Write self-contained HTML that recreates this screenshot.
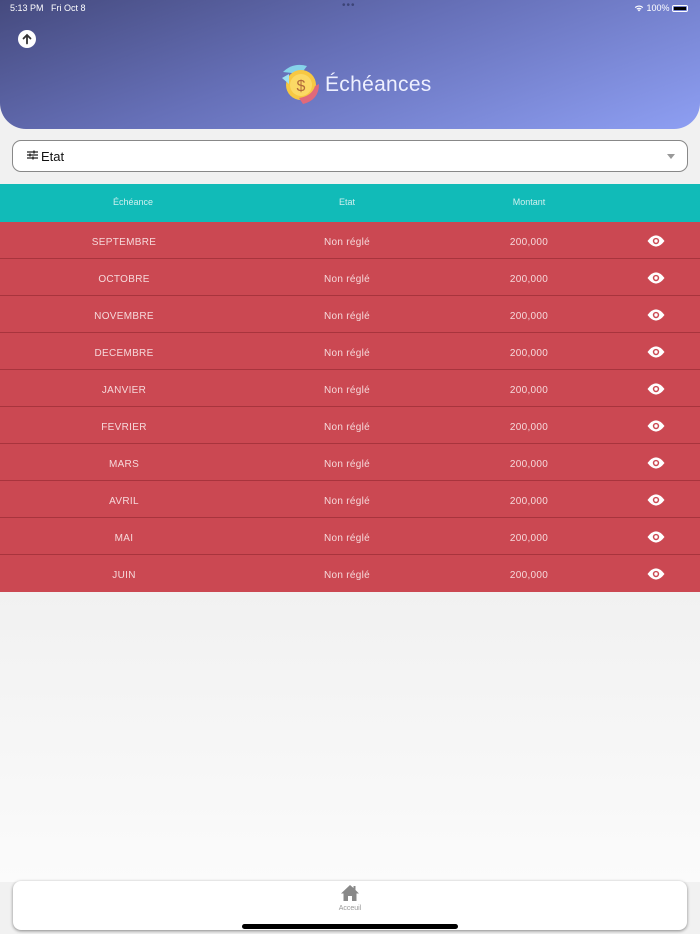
<!DOCTYPE html>
<html><head><meta charset="utf-8"><style>
*{margin:0;padding:0;box-sizing:border-box}
body{width:700px;height:934px;overflow:hidden;background:#f1f1f1;font-family:"Liberation Sans",sans-serif;position:relative}
.hdr{position:absolute;left:0;top:0;width:700px;height:129px;border-radius:0 0 26px 26px;background:linear-gradient(160deg,#454a7e 0%,#6670b8 45%,#8e9ff3 100%)}
.sb{position:absolute;top:3px;font-size:9px;color:#fff}
.back{position:absolute;left:18px;top:30px;width:18px;height:18px;border-radius:50%;background:#fff}
.title{position:absolute;left:325px;top:73px;font-size:21px;color:#eef0ff;font-weight:300;letter-spacing:.3px}
.sel{position:absolute;left:12px;top:140px;width:676px;height:32px;background:#fff;border:1.5px solid #888;border-radius:9px}
.sel span{position:absolute;left:28px;top:8px;font-size:13px;color:#111}
.th{position:absolute;left:0;top:184px;width:700px;height:38px;background:#11bbb8}
.th div,.row div{position:absolute;transform:translateX(-50%);white-space:nowrap}
.th div{top:13px;font-size:9px;color:#d0f0ef}
.row{position:absolute;left:0;width:700px;height:37px;background:#cb4852;border-bottom:1px solid #a8343d}
.row div{top:15px;font-size:10px;color:#f6d9db;letter-spacing:.3px}
.grad{position:absolute;left:0;top:592px;width:700px;height:290px;background:linear-gradient(#f1f1f1,#fbfbfb)}
.nav{position:absolute;left:13px;top:881px;width:674px;height:49px;background:#fff;border-radius:8px;box-shadow:0 1px 3px rgba(0,0,0,.45)}
.bar{position:absolute;left:242px;top:924px;width:216px;height:5px;border-radius:3px;background:#000}
</style></head><body>
<div class="hdr">
<div class="sb" style="left:10px">5:13 PM&nbsp;&nbsp; Fri Oct 8</div>
<div class="sb" style="left:342px;top:0;font-size:10px;letter-spacing:1px;color:#3c4477">•••</div>
<div class="sb" style="left:634px">
<svg width="10" height="8" viewBox="0 0 10 8" style="vertical-align:-1px"><path d="M5 7.5L3.6 6a2 2 0 0 1 2.8 0zM2.4 4.8a3.7 3.7 0 0 1 5.2 0l-.8.8a2.6 2.6 0 0 0-3.6 0zM.8 3.2a6 6 0 0 1 8.4 0l-.8.8a4.9 4.9 0 0 0-6.8 0z" fill="#fff"/></svg> 100%</div>
<div style="position:absolute;left:672px;top:5px;width:16px;height:7px;border:1px solid #fff;border-radius:2px;padding:1px"><div style="width:100%;height:100%;background:#000"></div></div>
<div class="back"><svg width="18" height="18" viewBox="0 0 18 18"><path d="M9 13.5V5M5.5 8.5L9 5l3.5 3.5" stroke="#333" stroke-width="1.8" fill="none" stroke-linecap="round"/></svg></div>
<svg style="position:absolute;left:279px;top:62px" width="44" height="44" viewBox="0 0 44 44">
<path d="M4 10 Q14 0 28 4 L22 12 Z" fill="#86d3ea"/>
<circle cx="22" cy="23" r="15" fill="#f7c843"/>
<circle cx="22" cy="23" r="11" fill="#fbd965"/>
<text x="22" y="29" font-size="16" text-anchor="middle" fill="#b06a3a" font-family="Liberation Sans">$</text>
<path d="M40 22 Q40 38 24 42 L20 36 Q33 34 36 24 Z" fill="#e2697a"/>
<path d="M3 16 L10 12 L10 22 Z" fill="#9fe0f0"/>
</svg>
<div class="title">Échéances</div>
</div>
<div class="sel"><svg style="position:absolute;left:14px;top:9px" width="11" height="10" viewBox="0 0 11 10"><path d="M0 2h11M0 5h11M0 8h11" stroke="#222" stroke-width="1.2"/><path d="M7 0.5v3M3 3.5v3M6 6.5v3" stroke="#222" stroke-width="1.4"/></svg><span>Etat</span>
<svg style="position:absolute;right:12px;top:13px" width="8" height="5"><path d="M0 0h8L4 5z" fill="#999"/></svg></div>
<div class="th"><div style="left:133px">Échéance</div><div style="left:347px">Etat</div><div style="left:529px">Montant</div></div>
<div class="row" style="top:222px"><div style="left:124px">SEPTEMBRE</div><div style="left:347px">Non réglé</div><div style="left:529px">200,000</div><div style="left:656px;top:13px"><svg width="17" height="12" viewBox="0 0 16 11"><path d="M0 5.5Q8-5 16 5.5Q8 16 0 5.5z" fill="#fff"/><circle cx="8" cy="5.5" r="3" fill="#cb4852"/><circle cx="8" cy="5.5" r="1.6" fill="#fff"/></svg></div></div>
<div class="row" style="top:259px"><div style="left:124px">OCTOBRE</div><div style="left:347px">Non réglé</div><div style="left:529px">200,000</div><div style="left:656px;top:13px"><svg width="17" height="12" viewBox="0 0 16 11"><path d="M0 5.5Q8-5 16 5.5Q8 16 0 5.5z" fill="#fff"/><circle cx="8" cy="5.5" r="3" fill="#cb4852"/><circle cx="8" cy="5.5" r="1.6" fill="#fff"/></svg></div></div>
<div class="row" style="top:296px"><div style="left:124px">NOVEMBRE</div><div style="left:347px">Non réglé</div><div style="left:529px">200,000</div><div style="left:656px;top:13px"><svg width="17" height="12" viewBox="0 0 16 11"><path d="M0 5.5Q8-5 16 5.5Q8 16 0 5.5z" fill="#fff"/><circle cx="8" cy="5.5" r="3" fill="#cb4852"/><circle cx="8" cy="5.5" r="1.6" fill="#fff"/></svg></div></div>
<div class="row" style="top:333px"><div style="left:124px">DECEMBRE</div><div style="left:347px">Non réglé</div><div style="left:529px">200,000</div><div style="left:656px;top:13px"><svg width="17" height="12" viewBox="0 0 16 11"><path d="M0 5.5Q8-5 16 5.5Q8 16 0 5.5z" fill="#fff"/><circle cx="8" cy="5.5" r="3" fill="#cb4852"/><circle cx="8" cy="5.5" r="1.6" fill="#fff"/></svg></div></div>
<div class="row" style="top:370px"><div style="left:124px">JANVIER</div><div style="left:347px">Non réglé</div><div style="left:529px">200,000</div><div style="left:656px;top:13px"><svg width="17" height="12" viewBox="0 0 16 11"><path d="M0 5.5Q8-5 16 5.5Q8 16 0 5.5z" fill="#fff"/><circle cx="8" cy="5.5" r="3" fill="#cb4852"/><circle cx="8" cy="5.5" r="1.6" fill="#fff"/></svg></div></div>
<div class="row" style="top:407px"><div style="left:124px">FEVRIER</div><div style="left:347px">Non réglé</div><div style="left:529px">200,000</div><div style="left:656px;top:13px"><svg width="17" height="12" viewBox="0 0 16 11"><path d="M0 5.5Q8-5 16 5.5Q8 16 0 5.5z" fill="#fff"/><circle cx="8" cy="5.5" r="3" fill="#cb4852"/><circle cx="8" cy="5.5" r="1.6" fill="#fff"/></svg></div></div>
<div class="row" style="top:444px"><div style="left:124px">MARS</div><div style="left:347px">Non réglé</div><div style="left:529px">200,000</div><div style="left:656px;top:13px"><svg width="17" height="12" viewBox="0 0 16 11"><path d="M0 5.5Q8-5 16 5.5Q8 16 0 5.5z" fill="#fff"/><circle cx="8" cy="5.5" r="3" fill="#cb4852"/><circle cx="8" cy="5.5" r="1.6" fill="#fff"/></svg></div></div>
<div class="row" style="top:481px"><div style="left:124px">AVRIL</div><div style="left:347px">Non réglé</div><div style="left:529px">200,000</div><div style="left:656px;top:13px"><svg width="17" height="12" viewBox="0 0 16 11"><path d="M0 5.5Q8-5 16 5.5Q8 16 0 5.5z" fill="#fff"/><circle cx="8" cy="5.5" r="3" fill="#cb4852"/><circle cx="8" cy="5.5" r="1.6" fill="#fff"/></svg></div></div>
<div class="row" style="top:518px"><div style="left:124px">MAI</div><div style="left:347px">Non réglé</div><div style="left:529px">200,000</div><div style="left:656px;top:13px"><svg width="17" height="12" viewBox="0 0 16 11"><path d="M0 5.5Q8-5 16 5.5Q8 16 0 5.5z" fill="#fff"/><circle cx="8" cy="5.5" r="3" fill="#cb4852"/><circle cx="8" cy="5.5" r="1.6" fill="#fff"/></svg></div></div>
<div class="row" style="top:555px;border-bottom:none"><div style="left:124px">JUIN</div><div style="left:347px">Non réglé</div><div style="left:529px">200,000</div><div style="left:656px;top:13px"><svg width="17" height="12" viewBox="0 0 16 11"><path d="M0 5.5Q8-5 16 5.5Q8 16 0 5.5z" fill="#fff"/><circle cx="8" cy="5.5" r="3" fill="#cb4852"/><circle cx="8" cy="5.5" r="1.6" fill="#fff"/></svg></div></div>
<div class="grad"></div>
<div class="nav">
<svg style="position:absolute;left:327px;top:3px" width="20" height="18" viewBox="0 0 20 18"><path d="M10 1L1 9.5h2.5V17h4.5v-5h4v5h4.5V9.5H19L15.5 6V2h-2v2z" fill="#888"/></svg>
<div style="position:absolute;left:0;width:674px;top:24px;text-align:center;font-size:7px;color:#999">Acceuil</div>
</div>
<div class="bar"></div>
</body></html>
